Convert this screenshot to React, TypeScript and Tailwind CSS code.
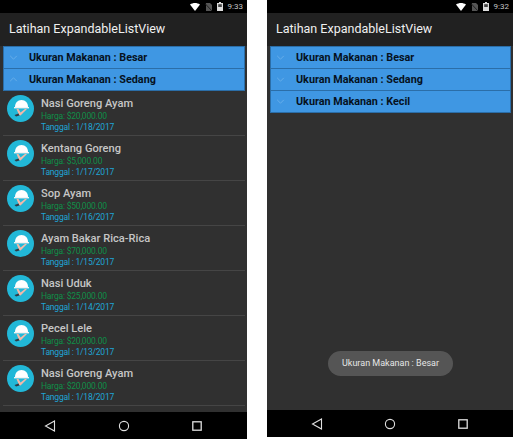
import React from 'react';

const foods = [
  { name: 'Nasi Goreng Ayam', price: '$20,000.00', date: '1/18/2017' },
  { name: 'Kentang Goreng', price: '$5,000.00', date: '1/17/2017' },
  { name: 'Sop Ayam', price: '$50,000.00', date: '1/16/2017' },
  { name: 'Ayam Bakar Rica-Rica', price: '$70,000.00', date: '1/15/2017' },
  { name: 'Nasi Uduk', price: '$25,000.00', date: '1/14/2017' },
  { name: 'Pecel Lele', price: '$20,000.00', date: '1/13/2017' },
  { name: 'Nasi Goreng Ayam', price: '$20,000.00', date: '1/18/2017' },
];

function FoodIcon() {
  return (
    <svg viewBox="0 0 27 27" className="w-[27px] h-[27px] shrink-0">
      <circle cx="13.5" cy="13.5" r="13.5" fill="#22b8d8" />
      <path d="M9.5 14 L11.5 14 L13.5 17.5 L18 14 L20 14 L13.5 20.5 L12 20 Z" fill="#f3b8a8" />
      <path d="M7.5 20 L11.5 18.5 L12.5 20.5 L9 21.5 Z" fill="#2f3b46" />
      <path d="M8 12 C8 8 10.5 5 14.5 5 C18.5 5 21 8 21 12 Z" fill="#ffffff" />
      <rect x="7" y="12" width="15" height="1.4" fill="#f4f4f4" />
    </svg>
  );
}

function StatusBar({ time }: { time: string }) {
  return (
    <div className="h-[13px] bg-black flex items-center justify-end pr-[4px] gap-[5px] shrink-0">
      <svg viewBox="0 0 10 8" className="w-[10px] h-[8px]">
        <path d="M0 1.5 C3 -0.5 7 -0.5 10 1.5 L5 8 Z" fill="#ffffff" />
      </svg>
      <svg viewBox="0 0 7 8" className="w-[7px] h-[8px]">
        <path d="M1 0 H5 L7 2 V8 H1 Z" fill="#555555" />
        <path d="M0 0.5 L7 8" stroke="#222222" strokeWidth="1" />
      </svg>
      <svg viewBox="0 0 6 9" className="w-[6px] h-[9px]">
        <path d="M2 0 H4 V1 H6 V9 H0 V1 H2 Z" fill="#dddddd" />
        <path d="M1.2 2.2 H4.8 V5 H1.2 Z" fill="#444444" />
      </svg>
      <span className="text-[8px] leading-none text-[#c4c4c4]">{time}</span>
    </div>
  );
}

function AppBar() {
  return (
    <div className="h-[33px] bg-[#212121] flex items-center pl-[9px] shrink-0 text-[12.5px] text-[#f0f0f0]">
      Latihan ExpandableListView
    </div>
  );
}

function GroupRow({ label, open }: { label: string; open?: boolean }) {
  return (
    <div className="h-[23px] shrink-0 bg-[#3f97e3] border border-[#2b6ea8] -mt-px first:mt-0 flex items-center pl-[5px] gap-[11px] text-[10.8px] font-bold text-[#06121e]">
      <svg viewBox="0 0 10 6" className="w-[9px] h-[5px] shrink-0" fill="none" stroke="#6fb2ea" strokeWidth="1">
        <path d={open ? 'M1 5 L5 1 L9 5' : 'M1 1 L5 5 L9 1'} />
      </svg>
      <span className="pt-[2px]">{label}</span>
    </div>
  );
}

function NavBar() {
  return (
    <div className="h-[27px] bg-black flex items-center justify-between px-[44px] shrink-0">
      <svg viewBox="0 0 12 12" className="w-[12px] h-[12px]" fill="none" stroke="#e0e0e0" strokeWidth="1.1">
        <path d="M10.5 1 L1.5 6 L10.5 11 Z" />
      </svg>
      <svg viewBox="0 0 12 12" className="w-[12px] h-[12px]" fill="none" stroke="#e0e0e0" strokeWidth="1.1">
        <circle cx="6" cy="6" r="4.6" />
      </svg>
      <svg viewBox="0 0 12 12" className="w-[12px] h-[12px]" fill="none" stroke="#e0e0e0" strokeWidth="1.3">
        <rect x="1.8" y="1.8" width="8.4" height="8.4" />
      </svg>
    </div>
  );
}

function FoodRow({ item }: { item: (typeof foods)[number] }) {
  return (
    <div className="h-[45px] shrink-0 flex items-start gap-[7px] pt-[4px] pl-[4px] border-b border-[#454545]">
      <FoodIcon />
      <div className="flex flex-col pt-[2px]">
        <span className="text-[11.1px] leading-[13px] mb-px font-medium text-[#c6c6c6]">{item.name}</span>
        <span className="text-[8.5px] leading-[11px] tracking-[-0.2px] text-[#0f8f48]">Harga: {item.price}</span>
        <span className="text-[8.5px] leading-[10px] tracking-[-0.2px] text-[#1fa5d6]">Tanggal : {item.date}</span>
      </div>
    </div>
  );
}

export default function App() {
  return (
    <div className="w-[516px] h-[444px] bg-white flex items-start gap-[20px] overflow-hidden" style={{ fontFamily: 'Roboto, sans-serif' }}>
      {/* left phone */}
      <div className="w-[247px] h-[439px] flex flex-col bg-[#303030]">
        <StatusBar time="9:33" />
        <AppBar />
        <div className="flex-1 min-h-0 overflow-hidden flex flex-col px-[3px] pr-[2px]">
          <GroupRow label="Ukuran Makanan : Besar" />
          <GroupRow label="Ukuran Makanan : Sedang" open />
          {foods.map((item, i) => (
            <FoodRow key={i} item={item} />
          ))}
        </div>
        <NavBar />
      </div>

      {/* right phone */}
      <div className="w-[246px] h-[437px] flex flex-col bg-[#303030]">
        <StatusBar time="9:32" />
        <AppBar />
        <div className="flex-1 min-h-0 flex flex-col px-[3px] pr-[2px]">
          <GroupRow label="Ukuran Makanan : Besar" />
          <GroupRow label="Ukuran Makanan : Sedang" />
          <GroupRow label="Ukuran Makanan : Kecil" />
          <div className="mt-auto mb-[34px] self-center h-[25px] px-[14px] rounded-full bg-[#555555] flex items-center text-[9px] text-[#e6e6e6]">
            Ukuran Makanan : Besar
          </div>
        </div>
        <NavBar />
      </div>
    </div>
  );
}
